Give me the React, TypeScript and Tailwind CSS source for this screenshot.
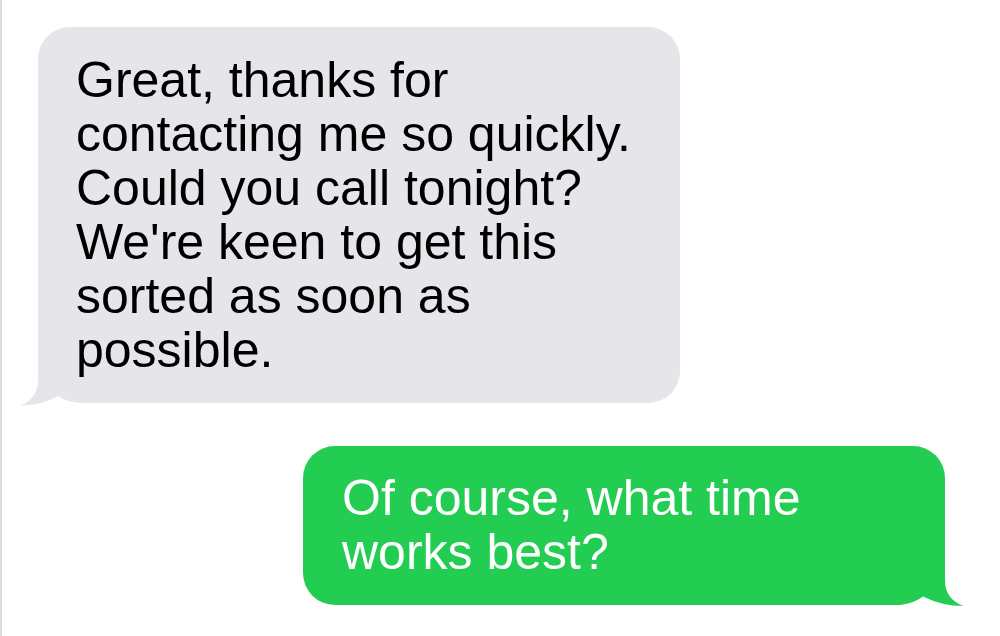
import React from 'react';

const font = { fontFamily: '"Liberation Sans", Arial, Helvetica, sans-serif' };

function GrayTail() {
  return (
    <svg
      className="absolute left-[-24px] top-[351px] h-[30px] w-[80px]"
      viewBox="14 378 80 30"
      aria-hidden
    >
      <rect x="14" y="378" width="80" height="30" fill="#ffffff" />
      <path
        d="M38 378 L38 381 C38 392 31 402 20 405.5 Q42 405.5 58 396 Q66 402 82 403 L94 403 L94 378 Z"
        fill="#e5e5ea"
      />
    </svg>
  );
}

function GreenTail() {
  return (
    <svg
      className="absolute left-[583px] top-[132px] h-[32px] w-[84px]"
      viewBox="886 578 84 32"
      aria-hidden
    >
      <rect x="886" y="578" width="84" height="32" fill="#ffffff" />
      <path
        d="M945 578 L945 581 C945 593 952 602 963.5 606 Q942 606 923 596.5 Q915 603 900 605 L886 605 L886 578 Z"
        fill="#23cd52"
      />
    </svg>
  );
}

export default function App() {
  return (
    <div
      className="flex h-[636px] w-[1000px] flex-col overflow-hidden border-l-2 border-[#dcdcdc] bg-white pl-[36px] pr-[55px] pt-[27px]"
      style={font}
    >
      <div className="relative w-[642px] self-start rounded-[32px] rounded-bl-none bg-[#e5e5ea] pb-[26px] pl-[38px] pr-[30px] pt-[26px]">
        <GrayTail />
        <p className="relative z-10 text-[50px] leading-[54px] text-black">
          Great, thanks for contacting me so quickly. Could you call tonight? We're keen to get this sorted as soon as possible.
        </p>
      </div>

      <div className="relative mt-[43px] w-[642px] self-end rounded-[32px] rounded-br-none bg-[#23cd52] pb-[26px] pl-[39px] pr-[39px] pt-[25px]">
        <GreenTail />
        <p className="relative z-10 text-[50px] leading-[54px] text-white">
          Of course, what time works best?
        </p>
      </div>
    </div>
  );
}
